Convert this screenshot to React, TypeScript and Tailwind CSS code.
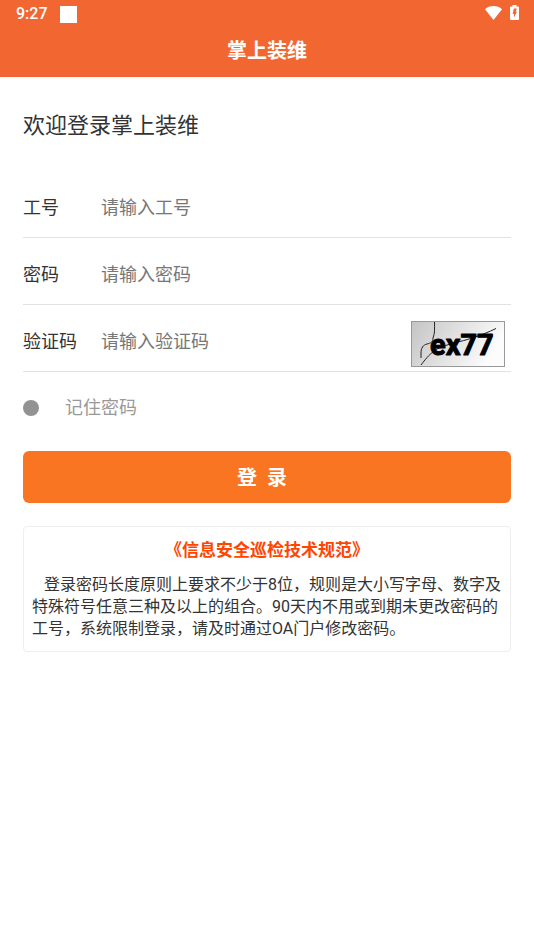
import type { ReactNode } from "react";

function StatusBar() {
  return (
    <div className="flex h-7 items-center justify-between pl-4 pr-[15px]">
      <div className="flex items-center gap-3">
        <span className="text-base font-medium leading-7">9:27</span>
        <span className="size-[17px] bg-white" />
      </div>
      <div className="flex items-center gap-2 pb-[3px]">
        <svg width="17" height="14" viewBox="0 0 17 14" fill="currentColor" aria-hidden="true">
          <path d="M0 3.2C2.3 1.2 5.2 0 8.5 0S14.7 1.2 17 3.2L8.5 14Z" />
        </svg>
        <svg width="9" height="15" viewBox="0 0 9 15" aria-hidden="true">
          <path
            d="M2.5 0h4v1.5H8a1 1 0 0 1 1 1V14a1 1 0 0 1-1 1H1a1 1 0 0 1-1-1V2.5a1 1 0 0 1 1-1h1.5Z"
            fill="currentColor"
          />
          <path d="M3.8 3.5h3L5.7 6.8h1.3L4 12.5V9H2.7Z" fill="#f26631" />
        </svg>
      </div>
    </div>
  );
}

function Captcha() {
  return (
    <button type="button" aria-label="验证码" className="mb-1 mr-[6px] shrink-0 self-end">
      <svg width="94" height="46" viewBox="0 0 94 46">
        <defs>
          <linearGradient id="captcha-bg" x1="0" y1="0" x2="1" y2="0.3">
            <stop offset="0" stopColor="#c4c4c4" />
            <stop offset="1" stopColor="#fcfcfc" />
          </linearGradient>
        </defs>
        <rect x="0.5" y="0.5" width="93" height="45" fill="url(#captcha-bg)" stroke="#999" />
        <path
          d="M10 37V32C10 27 12 24 16 23C20 22 22 21 22 17C24 12 23.500 8 23.500 1M10 44C16 36 19 33 25 28.500C38 22 50 21 61 17C70 14 78 11 85 7.500"
          fill="none"
          stroke="#222"
        />
        <text
          x="19"
          y="34"
          fontFamily="Roboto"
          fontSize="29"
          fontWeight="700"
          stroke="#000"
          strokeLinejoin="round"
        >
          ex77
        </text>
      </svg>
    </button>
  );
}

function Field({
  id,
  label,
  placeholder,
  type = "text",
  children,
}: {
  id: string;
  label: string;
  placeholder: string;
  type?: string;
  children?: ReactNode;
}) {
  return (
    <div className="flex h-[67px] items-center border-b border-[#e2e2e2]">
      <label htmlFor={id} className="w-[78px] shrink-0 pt-2 text-lg">
        {label}
      </label>
      <input
        id={id}
        type={type}
        placeholder={placeholder}
        className="min-w-0 flex-1 bg-transparent pt-2 text-lg outline-none placeholder:text-[#777]"
      />
      {children}
    </div>
  );
}

export default function App() {
  return (
    <div className="min-h-screen bg-white font-[Roboto,'Noto_Sans_CJK_SC',sans-serif] text-[#333]">
      <header className="bg-[#f26631] text-white">
        <StatusBar />
        <h1 className="pb-[10px] pt-[7px] text-center text-xl leading-8 font-bold">掌上装维</h1>
      </header>

      <main className="px-[23px] pt-[33px]">
        <h2 className="text-[22px] leading-8">欢迎登录掌上装维</h2>

        <form className="pt-[29px]" onSubmit={(e) => e.preventDefault()}>
          <Field id="job" label="工号" placeholder="请输入工号" />
          <Field id="password" type="password" label="密码" placeholder="请输入密码" />
          <Field id="code" label="验证码" placeholder="请输入验证码">
            <Captcha />
          </Field>

          <label className="flex h-[79px] items-center gap-[26px] pb-[7px] text-lg text-[#999]">
            <input type="checkbox" className="size-4 appearance-none rounded-full bg-[#929292]" />
            记住密码
          </label>

          <button
            type="submit"
            className="h-[52px] w-full rounded-md bg-[#f97522] pt-[2px] text-xl font-bold text-white"
          >
            登&nbsp;&nbsp;录&nbsp;&nbsp;
          </button>
        </form>

        <section className="mt-[23px] rounded-sm border border-[#eee] px-2 pb-[11px] pt-[11px]">
          <h3 className="text-center text-[17px] leading-6 font-bold text-[#ff4500]">
            《信息安全巡检技术规范》
          </h3>
          <p className="mt-3 indent-3 text-base leading-[22px]">
            登录密码长度原则上要求不少于8位，规则是大小写字母、数字及特殊符号任意三种及以上的组合。90天内不用或到期未更改密码的工号，系统限制登录，请及时通过OA门户修改密码。
          </p>
        </section>
      </main>
    </div>
  );
}
